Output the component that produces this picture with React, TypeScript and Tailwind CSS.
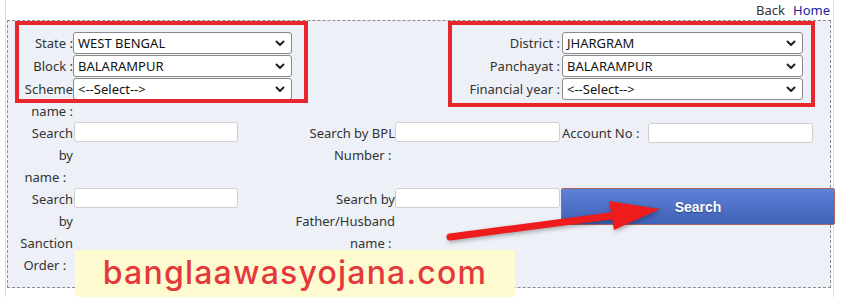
import React from "react";

const Chevron = () => (
  <svg width="10" height="7" viewBox="0 0 10 7" className="shrink-0">
    <path d="M1.5 1.5 L5 5 L8.5 1.5" fill="none" stroke="#222" strokeWidth="2" strokeLinecap="round" strokeLinejoin="round" />
  </svg>
);

function FakeSelect({ value, width }: { value: string; width: string }) {
  return (
    <div
      className={`${width} shrink-0 h-[22px] flex items-center justify-between bg-white border border-[#8a8a8a] rounded-[3px] pl-[4px] pr-[6px] text-[13px] text-[#111] leading-none`}
    >
      <span>{value}</span>
      <Chevron />
    </div>
  );
}

function TextBox({ width }: { width: string }) {
  return <div className={`${width} shrink-0 h-[20px] bg-white border border-[#cfcfcf] rounded-[3px]`} />;
}

const topRows = [
  { left: "State :", leftVal: "WEST BENGAL", right: "District :", rightVal: "JHARGRAM" },
  { left: "Block :", leftVal: "BALARAMPUR", right: "Panchayat :", rightVal: "BALARAMPUR" },
  { left: "Scheme name :", leftVal: "<--Select-->", right: "Financial year :", rightVal: "<--Select-->" },
];

export default function App() {
  return (
    <div
      className="relative w-[845px] h-[297px] overflow-hidden bg-white text-[13px] text-[#333]"
      style={{ fontFamily: '"Noto Sans", "Open Sans", sans-serif' }}
    >
      <div className="ml-[5px] w-[829px] h-full border-l border-r border-[#dcdcdc]">
        {/* top links */}
        <div className="h-[20px] flex justify-end items-center gap-[8px] pr-[3px] leading-none">
          <span className="text-[#333]">Back</span>
          <span className="text-[#22229a]">Home</span>
        </div>

        {/* form panel */}
        <div className="ml-px w-[824px] h-[268px] border border-dashed border-[#8c8c8c] bg-[#edf1f7] pt-[11px]">
          <div className="flex flex-col gap-[1px]">
            {topRows.map((r) => (
              <div key={r.left} className="flex items-start">
                <div className="w-[65px] shrink-0 pl-[12px] text-right leading-[22px]">{r.left}</div>
                <FakeSelect value={r.leftVal} width="w-[219px]" />
                <div className="flex-1 text-right leading-[22px] pr-[2px]">{r.right}</div>
                <FakeSelect value={r.rightVal} width="w-[241px]" />
                <div className="w-[27px] shrink-0" />
              </div>
            ))}
          </div>

          {/* search by name / BPL / account */}
          <div className="flex items-start leading-[22px]">
            <div className="w-[65px] shrink-0 pl-[12px] text-right">
              Search
              <br />
              by
              <br />
              name :{"\u00a0\u00a0"}
            </div>
            <div className="w-[219px] shrink-0 pl-px">
              <TextBox width="w-[164px]" />
            </div>
            <div className="w-[103px] shrink-0 text-right">Search by BPL Number :{"\u00a0"}</div>
            <TextBox width="w-[165px]" />
            <div className="w-[88px] shrink-0 pl-[2px]">Account No :</div>
            <div className="mt-px shrink-0">
              <TextBox width="w-[165px]" />
            </div>
          </div>

          {/* search by sanction / father */}
          <div className="flex items-start leading-[22px]">
            <div className="w-[65px] shrink-0 pl-[12px] text-right">
              Search
              <br />
              by
              <br />
              Sanction
              <br />
              Order :{"\u00a0\u00a0"}
            </div>
            <div className="w-[219px] shrink-0 pl-px">
              <TextBox width="w-[164px]" />
            </div>
            <div className="w-[103px] shrink-0 text-right">Search by Father/Husband name :{"\u00a0"}</div>
            <TextBox width="w-[165px]" />
            <div
              className="ml-px w-[274px] shrink-0 h-[37px] flex items-center justify-center rounded-[2px] border border-[#a8645e] bg-gradient-to-b from-[#5e82d8] to-[#3f61b6] text-white font-bold text-[14px] [text-shadow:0_1px_1px_rgba(0,0,0,0.35)]"
              style={{ fontFamily: '"Liberation Sans", Arial, sans-serif' }}
            >
              Search
            </div>
          </div>
        </div>
      </div>

      {/* annotation boxes */}
      <div className="absolute left-[15px] top-[21px] w-[293px] h-[82px] border-4 border-[#e8262d] pointer-events-none" />
      <div className="absolute left-[448px] top-[21px] w-[367px] h-[86px] border-4 border-[#e8262d] pointer-events-none" />

      {/* arrow */}
      <svg className="absolute left-0 top-0 pointer-events-none" width="845" height="297" viewBox="0 0 845 297">
        <g style={{ filter: "drop-shadow(1px 2px 2px rgba(0,0,0,0.3))" }}>
          <line x1="450" y1="237" x2="625" y2="214" stroke="#ee1c1c" strokeWidth="7" strokeLinecap="round" />
          <polygon points="609,201 660,209 614,230" fill="#ee1c1c" />
        </g>
      </svg>

      {/* watermark */}
      <div
        className="absolute left-[75px] top-[250px] w-[440px] h-[47px] bg-[#fdfbcf] flex items-center justify-center text-[32px] font-medium text-[#e5383d] tracking-[1.2px] pb-[2px]"
        style={{ fontFamily: 'Inter, "Noto Sans", sans-serif' }}
      >
        banglaawasyojana.com
      </div>
    </div>
  );
}
